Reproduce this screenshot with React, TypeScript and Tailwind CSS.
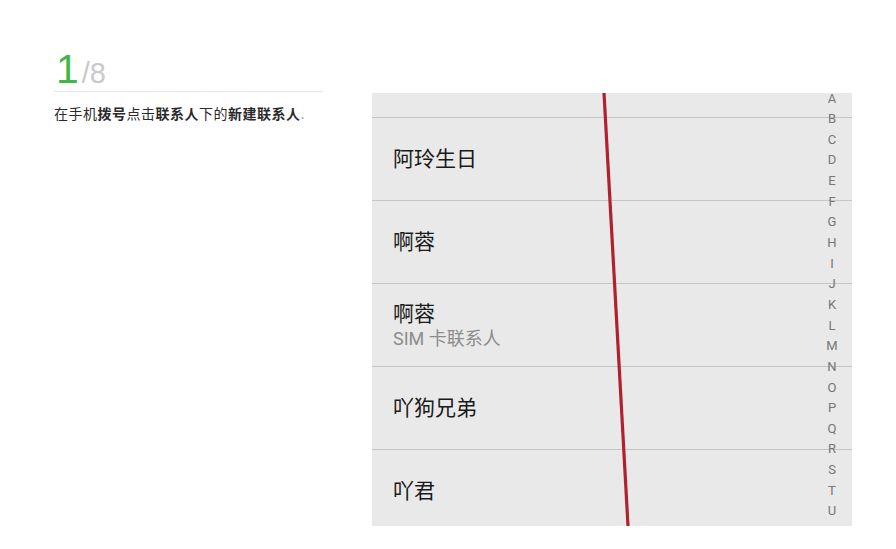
import React from "react";

const letters = "ABCDEFGHIJKLMNOPQRSTUV".split("");

function Row({ name, sub, first }: { name?: string; sub?: string; first?: boolean }) {
  if (first) {
    return <div className="h-[25px] shrink-0 border-b border-[#c6c6c6]" />;
  }
  return (
    <div className="h-[83px] shrink-0 border-b border-[#c6c6c6] flex flex-col justify-center pl-[21px]">
      <div className="text-[21px] leading-[26px] text-[#1a1a1a]">{name}</div>
      {sub && <div className="text-[18px] leading-[22px] text-[#8c8c8c] mt-[1px]">{sub}</div>}
    </div>
  );
}

export default function App() {
  return (
    <div className="w-[896px] h-[549px] bg-white overflow-hidden flex pl-[54px] pt-[49px]">
      <div className="w-[269px] shrink-0">
        <div
          className="flex items-baseline h-[43px] pb-[3px] border-b border-[#e6e6e6]"
          style={{ fontFamily: '"Liberation Sans", Arial, sans-serif' }}
        >
          <span className="text-[41px] leading-[40px] text-[#41b649] ml-[2px]">1</span>
          <span className="text-[29px] leading-[29px] text-[#c9c9c9] ml-[3px]">/8</span>
        </div>
        <div
          className="mt-[11px] text-[14px] leading-[20px] text-[#2a2a2a] tracking-[0.5px]"
          style={{ fontFamily: '"Noto Sans CJK SC", sans-serif' }}
        >
          在手机<b>拨号</b>点击<b>联系人</b>下的<b>新建联系人</b>
          <span className="text-[#9ab]">.</span>
        </div>
      </div>
      <div
        className="ml-[49px] mt-[44px] w-[480px] h-[433px] shrink-0 bg-[#e9e9e9] relative overflow-hidden flex flex-col"
        style={{ fontFamily: 'Roboto, "Noto Sans CJK SC", sans-serif' }}
      >
        <Row first />
        <Row name="阿玲生日" />
        <Row name="啊蓉" />
        <Row name="啊蓉" sub="SIM 卡联系人" />
        <Row name="吖狗兄弟" />
        <Row name="吖君" />
        <svg className="absolute left-0 top-0" width="480" height="433" viewBox="0 0 480 433">
          <line x1="232" y1="0" x2="256" y2="433" stroke="#b1212d" strokeWidth="3.2" />
        </svg>
        <div className="absolute left-[448px] top-[-5px] w-[24px] flex flex-col items-center">
          {letters.map((l) => (
            <div key={l} className="h-[20.65px] flex items-center justify-center text-[13px] text-[#767676]">
              {l}
            </div>
          ))}
        </div>
      </div>
    </div>
  );
}
